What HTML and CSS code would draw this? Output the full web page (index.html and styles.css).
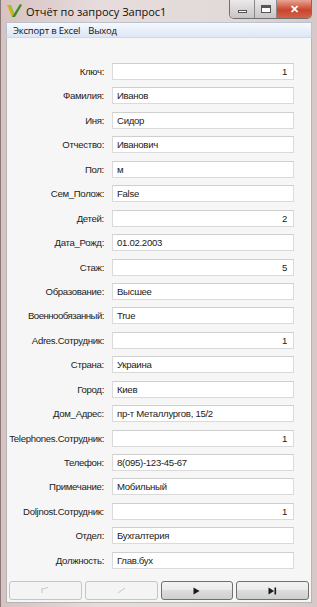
FILE: index.html
```html
<!DOCTYPE html>
<html lang="ru">
  <head>
    <meta charset="UTF-8" />
    <title>Отчёт по запросу Запрос1</title>
    <link rel="stylesheet" href="styles.css">
  </head>
  <body>
    <div class="window">
      <div class="titlebar">
        <svg class="app-icon" width="17" height="16" viewBox="0 0 17 16">
          <path d="M1 2 L6 14 L9 14 L5 2 Z" fill="#d8b11c" />
          <path d="M6 14 L14 1 L16 2 L9 14 Z" fill="#3f8d2a" />
          <path d="M3 2 L7 11 L8 10 L5 2 Z" fill="#8ac43a" />
        </svg>
        <span class="title">Отчёт по запросу Запрос1</span>
        <div class="caption-buttons">
          <span class="cap cap-min"><i></i></span>
          <span class="cap cap-max"><i></i></span>
          <span class="cap cap-close">✕</span>
        </div>
      </div>

      <div class="menubar">
        <span>Экспорт в Excel</span>
        <span>Выход</span>
      </div>

      <div class="client">
        <div class="form">
          <label>Ключ:</label><div class="box num">1</div>
          <label>Фамилия:</label><div class="box">Иванов</div>
          <label>Иня:</label><div class="box">Сидор</div>
          <label>Отчество:</label><div class="box">Иванович</div>
          <label>Пол:</label><div class="box">м</div>
          <label>Сем_Полож:</label><div class="box">False</div>
          <label>Детей:</label><div class="box num">2</div>
          <label>Дата_Рожд:</label><div class="box">01.02.2003</div>
          <label>Стаж:</label><div class="box num">5</div>
          <label>Образование:</label><div class="box">Высшее</div>
          <label class="tight">Военнообязанный:</label><div class="box">True</div>
          <label>Adres.Сотрудник:</label><div class="box num">1</div>
          <label>Страна:</label><div class="box">Украина</div>
          <label>Город:</label><div class="box">Киев</div>
          <label>Дом_Адрес:</label><div class="box">пр-т Металлургов, 15/2</div>
          <label>Telephones.Сотрудник:</label><div class="box num">1</div>
          <label>Телефон:</label><div class="box">8(095)-123-45-67</div>
          <label>Примечание:</label><div class="box">Мобильный</div>
          <label>Doljnost.Сотрудник:</label><div class="box num">1</div>
          <label>Отдел:</label><div class="box">Бухгалтерия</div>
          <label>Должность:</label><div class="box">Глав.бух</div>
        </div>

        <div class="navbar">
          <button class="navbtn" disabled>
            <svg width="9" height="7" viewBox="0 0 9 7"><path d="M1 1 V6 M1 2 L7 0.5" stroke="#c8c8c8" fill="none" /></svg>
          </button>
          <button class="navbtn" disabled>
            <svg width="9" height="7" viewBox="0 0 9 7"><path d="M1 6 L8 1" stroke="#c8c8c8" fill="none" /></svg>
          </button>
          <button class="navbtn">
            <svg width="7" height="8" viewBox="0 0 7 8"><path d="M0.5 0.5 L6.5 4 L0.5 7.5 Z" fill="#1a1a1a" /></svg>
          </button>
          <button class="navbtn">
            <svg width="9" height="8" viewBox="0 0 9 8"><path d="M0.5 0.5 L6 4 L0.5 7.5 Z" fill="#1a1a1a" /><rect x="6.5" y="0.5" width="1.6" height="7" fill="#1a1a1a" /></svg>
          </button>
        </div>
      </div>
    </div>
  </body>
</html>
```

FILE: styles.css
```css
* {
  margin: 0;
  box-sizing: border-box;
}

body {
  margin: 0;
  padding: 0;
  background: #d9c9c8;
  font-family: "Liberation Sans", Tahoma, sans-serif;
}

.window {
  width: 317px;
  height: 607px;
  display: flex;
  flex-direction: column;
  padding: 0 5px 4px 5px;
  background: linear-gradient(90deg, #d7c2c1 0%, #e6dcdc 30%, #e2d9d9 70%, #d8c8c8 100%);
  border-left: 1px solid #8a7777;
}

.titlebar {
  height: 22px;
  display: flex;
  align-items: center;
  position: relative;
  margin: 0 -5px;
  padding-left: 5px;
}

.app-icon {
  margin-right: 3px;
}

.title {
  font-family: "Open Sans", sans-serif;
  font-size: 11px;
  color: #111;
}

.caption-buttons {
  position: absolute;
  right: 5px;
  top: 0;
  display: flex;
  border: 1px solid #6f6f6f;
  border-top: none;
  border-radius: 0 0 5px 5px;
  overflow: hidden;
}

.cap {
  height: 18px;
  display: flex;
  align-items: center;
  justify-content: center;
  background: linear-gradient(#ece9ea, #c9c4c6);
  border-right: 1px solid #8a8a8a;
}

.cap-min {
  width: 25px;
}

.cap-min i {
  width: 9px;
  height: 3px;
  margin-top: 5px;
  background: #fff;
  border: 1px solid #555;
}

.cap-max {
  width: 22px;
}

.cap-max i {
  width: 10px;
  height: 8px;
  border: 1px solid #555;
  box-shadow: inset 0 2px 0 #555;
  background: #fff;
}

.cap-close {
  width: 34px;
  border-right: none;
  background: linear-gradient(#e8a493, #c9452c 55%, #d4614a);
  color: #fff;
  font-size: 11px;
  font-weight: bold;
}

.menubar {
  height: 16px;
  display: flex;
  gap: 8px;
  align-items: center;
  padding-left: 6px;
  background: linear-gradient(#f6f9fd, #dce6f4);
  border: 1px solid #b9c2cf;
  border-bottom-color: #cfd8e4;
  font-family: "Open Sans", sans-serif;
  font-size: 9.5px;
  letter-spacing: -0.2px;
  color: #111;
}

.client {
  flex: 1;
  display: flex;
  flex-direction: column;
  background: #f6f6f6;
  border: 1px solid #b5b5b5;
  border-top: none;
  padding: 25px 2px 2px 2px;
}

.form {
  display: grid;
  grid-template-columns: 95px 182px;
  column-gap: 8px;
  row-gap: 7.45px;
  font-size: 9.6px;
  letter-spacing: -0.3px;
  color: #222;
}

.form label {
  text-align: right;
  align-self: center;
  white-space: nowrap;
}

.form label.tight {
  letter-spacing: -0.5px;
}

.box {
  height: 17px;
  line-height: 15px;
  padding: 0 4px;
  background: #fff;
  border: 1px solid #dadada;
  border-top-color: #cfcfcf;
  white-space: nowrap;
}

.box.num {
  text-align: right;
  padding-right: 6px;
}

.navbar {
  margin-top: auto;
  display: grid;
  grid-template-columns: repeat(4, 1fr);
  gap: 3px;
}

.navbtn {
  height: 19px;
  padding: 0;
  display: flex;
  align-items: center;
  justify-content: center;
  border: 1px solid #707070;
  border-radius: 3px;
  background: linear-gradient(#f2f2f2 0%, #ebebeb 45%, #dddddd 50%, #cfcfcf 100%);
}

.navbtn:disabled {
  border-color: #c4c4c4;
  background: #f4f4f4;
}
```
